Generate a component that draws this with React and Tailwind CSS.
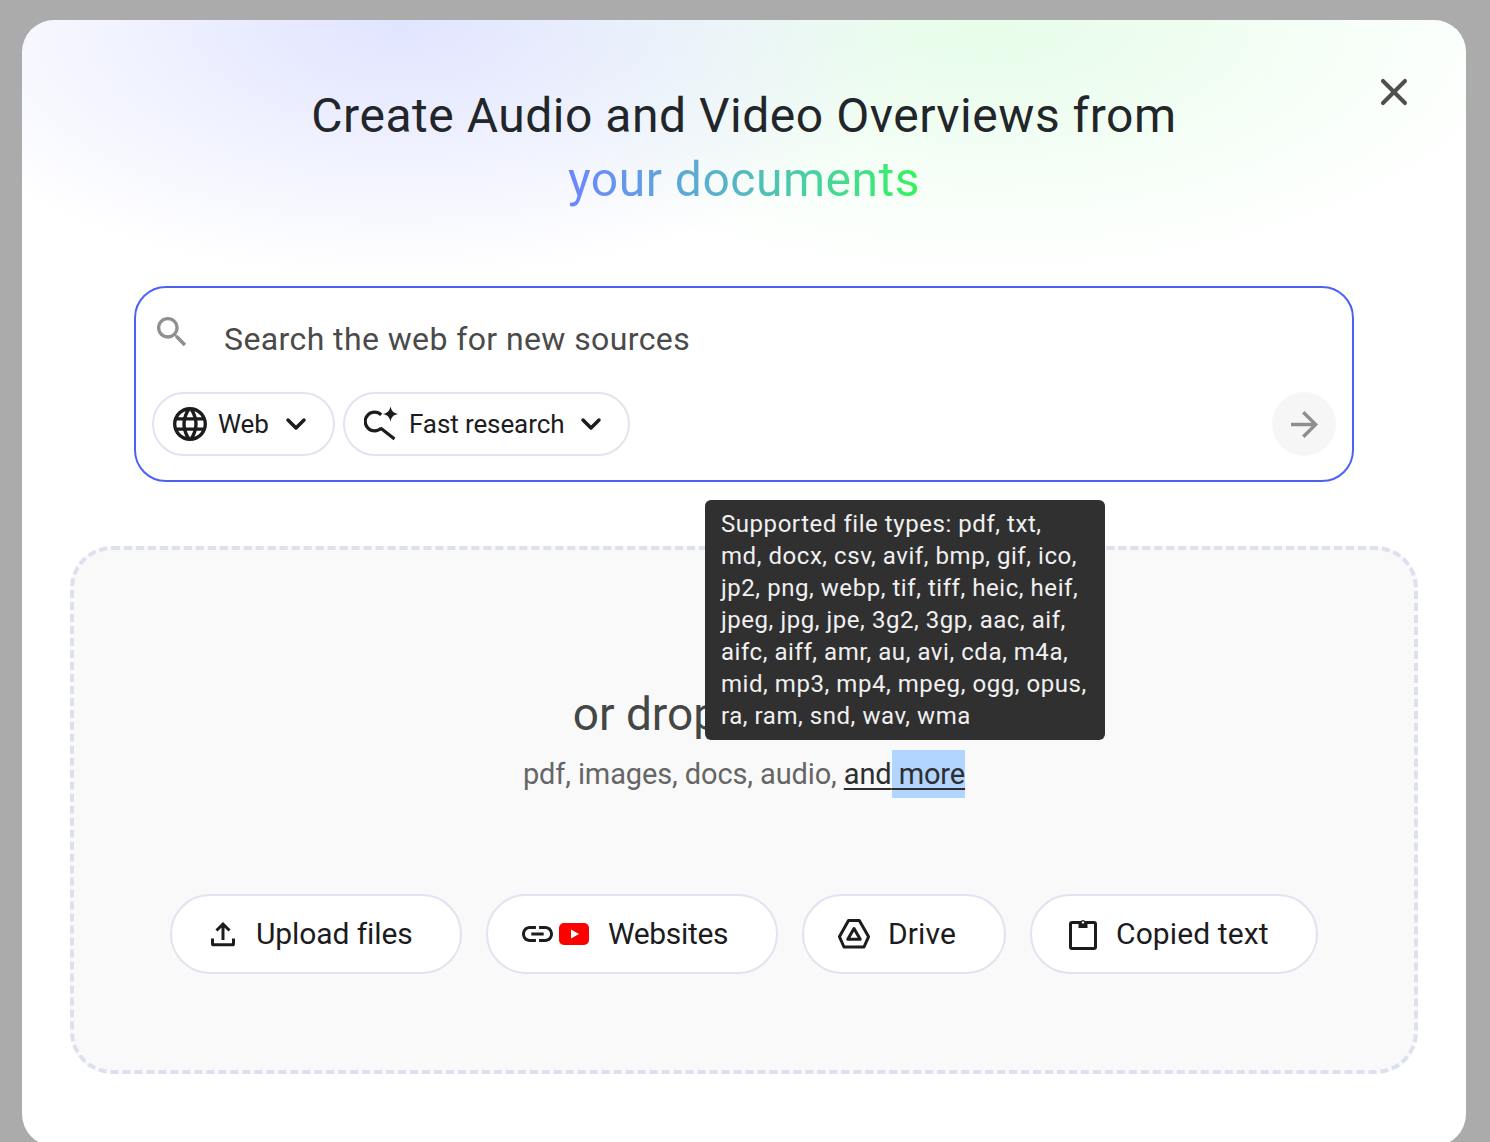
import { ChevronDown, X } from "lucide-react";

const SearchIcon = () => (
  <svg viewBox="0 0 24 24" className="h-[40px] w-[40px] fill-[#8f8f8f]">
    <path d="M15.5 14h-.79l-.28-.27C15.41 12.59 16 11.11 16 9.5 16 5.91 13.09 3 9.5 3S3 5.91 3 9.5 5.91 16 9.5 16c1.61 0 3.09-.59 4.23-1.57l.27.28v.79l5 4.99L20.49 19l-4.99-5zm-6 0C7.01 14 5 11.99 5 9.5S7.01 5 9.5 5 14 7.01 14 9.5 11.99 14 9.5 14z" />
  </svg>
);

const GlobeIcon = () => (
  <svg viewBox="2 2 20 20" className="h-[34px] w-[34px] shrink-0 fill-[#1c1c1e]">
    <path d="M11.99 2C6.47 2 2 6.48 2 12s4.47 10 9.99 10C17.52 22 22 17.52 22 12S17.52 2 11.99 2zm6.93 6h-2.95c-.32-1.25-.78-2.45-1.38-3.56 1.84.63 3.37 1.91 4.33 3.56zM12 4.04c.83 1.2 1.48 2.53 1.91 3.96h-3.82c.43-1.43 1.08-2.76 1.91-3.96zM4.26 14C4.1 13.36 4 12.69 4 12s.1-1.36.26-2h3.38c-.08.66-.14 1.32-.14 2 0 .68.06 1.34.14 2H4.26zm.82 2h2.95c.32 1.25.78 2.45 1.38 3.56-1.84-.63-3.37-1.9-4.33-3.56zm2.95-8H5.08c.96-1.66 2.49-2.93 4.33-3.56C8.81 5.55 8.35 6.75 8.03 8zM12 19.96c-.83-1.2-1.48-2.53-1.91-3.96h3.82c-.43 1.43-1.08 2.76-1.91 3.96zM14.34 14H9.66c-.09-.66-.16-1.32-.16-2 0-.68.07-1.35.16-2h4.68c.09.65.16 1.32.16 2 0 .68-.07 1.34-.16 2zm.25 5.56c.6-1.11 1.06-2.31 1.38-3.56h2.95c-.96 1.65-2.49 2.93-4.33 3.56zM16.36 14c.08-.66.14-1.32.14-2 0-.68-.06-1.34-.14-2h3.38c.16.64.26 1.31.26 2s-.1 1.36-.26 2h-3.38z" />
  </svg>
);

const SparkSearchIcon = () => (
  <svg viewBox="0 0 34 34" className="h-[34px] w-[34px] shrink-0">
    <path
      d="M17.2 7.8A9.4 9.4 0 1 0 17.2 21.2M16.5 21L30.5 32"
      fill="none"
      stroke="#1c1c1e"
      strokeWidth="3.2"
    />
    <path d="M26.5 -1c.8 5 3 7.2 8 8-5 .8-7.2 3-8 8-.8-5-3-7.2-8-8 5-.8 7.2-3 8-8z" fill="#1c1c1e" />
  </svg>
);

const UploadIcon = () => (
  <svg viewBox="0 0 26 26" className="h-[26px] w-[26px]" fill="none" stroke="#1c1c1e" strokeWidth="3">
    <path d="M13 19V3.5M6.5 9.5L13 3l6.5 6.5" />
    <path d="M2.5 17.5v5.2c0 .7.5 1.1 1.1 1.1h18.8c.6 0 1.1-.4 1.1-1.1v-5.2" />
  </svg>
);

const LinkIcon = () => (
  <svg viewBox="2 7 20 10" className="h-[16px] w-[31px]" preserveAspectRatio="none">
    <path
      fill="#1c1c1e"
      d="M3.9 12c0-1.71 1.39-3.1 3.1-3.1h4V7H7c-2.76 0-5 2.24-5 5s2.24 5 5 5h4v-1.9H7c-1.71 0-3.1-1.39-3.1-3.1zM8 13h8v-2H8v2zm9-6h-4v1.9h4c1.71 0 3.1 1.39 3.1 3.1s-1.39 3.1-3.1 3.1h-4V17h4c2.76 0 5-2.24 5-5s-2.24-5-5-5z"
    />
  </svg>
);

const YoutubeIcon = () => (
  <svg viewBox="0 0 30 22" className="h-[22px] w-[30px]">
    <rect width="30" height="22" rx="5" fill="#ff0000" />
    <path d="M12 6.5L20 11l-8 4.5z" fill="#fff" />
  </svg>
);

const DriveIcon = () => (
  <svg viewBox="0 0 32 30" className="h-[30px] w-[32px]" fill="none" stroke="#1c1c1e" strokeWidth="3" strokeLinejoin="round">
    <path d="M10.5 1.5h10.8L30.6 17.7 26 28H6L1.4 17.7z" />
    <path d="M16 9.5l6.2 10.7H9.8z" />
  </svg>
);

const ClipboardIcon = () => (
  <svg viewBox="0 0 28 32" className="h-[32px] w-[28px]">
    <path
      d="M3 4.5h22c.8 0 1.5.7 1.5 1.5v23c0 .8-.7 1.5-1.5 1.5H3c-.8 0-1.5-.7-1.5-1.5V6c0-.8.7-1.5 1.5-1.5z"
      fill="none"
      stroke="#1c1c1e"
      strokeWidth="3"
    />
    <path d="M9.5 3.5h2.1a2.6 2.6 0 0 1 4.8 0h2.1v6.5h-9z" fill="#1c1c1e" />
    <circle cx="14" cy="4.4" r="1.2" fill="#fff" />
  </svg>
);

const ArrowIcon = () => (
  <svg viewBox="4 4 16 16" className="h-[27px] w-[27px] fill-[#8e8e8e]">
    <path d="M12 4l-1.41 1.41L16.17 11H4v2h12.17l-5.58 5.59L12 20l8-8z" />
  </svg>
);

const Chip = ({ icon, label, className }) => (
  <button className={`flex h-16 items-center rounded-full border-2 border-[#e0e4ef] bg-white pl-[19px] text-[#1c1c1e] ${className}`}>
    {icon}
    <span className="ml-[11px] text-[26px] leading-8 font-normal tracking-[-0.1px]">{label}</span>
    <ChevronDown size={32} strokeWidth={2.6} className="ml-[11px]" />
  </button>
);

const SourceButton = ({ icon, label, className, labelClassName }) => (
  <button className={`flex h-20 items-center rounded-full border-2 border-[#e0e4f0] bg-white text-[#1c1c1e] ${className}`}>
    {icon}
    <span className={`text-[30px] leading-10 ${labelClassName}`}>{label}</span>
  </button>
);

export default function App() {
  return (
    <div className="h-[1142px] w-full overflow-hidden bg-[#ababab] pt-5 pr-[24px] pl-[22px] font-['Roboto',sans-serif]">
      <div className="relative h-[1126px] rounded-[32px] bg-white bg-[radial-gradient(ellipse_520px_260px_at_378px_0px,#e0e4ff_0%,rgba(255,255,255,0)_100%),radial-gradient(ellipse_560px_260px_at_965px_0px,#e6fde9_0%,rgba(255,255,255,0)_100%)] pt-16">
        <button className="absolute top-[50px] right-[50px] text-[#4d504f]">
          <X size={44} strokeWidth={2.2} />
        </button>

        <h1 className="text-center text-[48px] leading-16 font-normal tracking-[0.52px] text-[#22262a]">
          Create Audio and Video Overviews from
          <br />
          <span className="bg-gradient-to-r from-[#6c84ff] via-[#55b8c0] to-[#33f457] bg-clip-text text-transparent">
            your documents
          </span>
        </h1>

        <div className="mx-[112px] mt-[74px] h-[196px] rounded-[32px] border-2 border-[#4a63f5] bg-white px-4 pt-6">
          <div className="flex h-[54px] items-center">
            <div className="-mt-[14px]">
              <SearchIcon />
            </div>
            <span className="ml-[32px] text-[32px] leading-10 tracking-[0.4px] text-[#4a4a4a]">
              Search the web for new sources
            </span>
          </div>
          <div className="mt-[26px] flex items-center gap-2">
            <Chip icon={<GlobeIcon />} label="Web" className="w-[183px]" />
            <Chip icon={<SparkSearchIcon />} label="Fast research" className="w-[287px]" />
            <div className="ml-auto flex h-16 w-16 items-center justify-center rounded-full bg-[#f6f6f6]">
              <ArrowIcon />
            </div>
          </div>
        </div>

        <div className="relative mx-[48px] mt-16 h-[528px] rounded-[42px] border-4 border-dashed border-[#dde1ee] bg-[#f9f9f9] pt-[136px] text-center">
          <p className="text-[46px] leading-14 font-normal text-[#444746]">or drop your files</p>
          <p className="mt-2 flex h-12 items-center justify-center text-[29px] leading-12 tracking-[-0.12px] text-[#666]">
            <span className="whitespace-pre">pdf, images, docs, audio, </span>
            <span className="text-[#2e2e2e] underline decoration-2 underline-offset-4">and</span>
            <span className="h-12 whitespace-pre bg-[#b2d5ff] text-[#2e2e2e] underline decoration-2 underline-offset-4"> more</span>
          </p>

          <div className="mt-24 flex justify-center gap-6">
            <SourceButton icon={<UploadIcon />} label="Upload files" className="w-[292px] gap-[20px] pl-[38px]" labelClassName="tracking-[-0.1px]" />
            <SourceButton
              icon={
                <span className="flex items-center gap-[6px]">
                  <LinkIcon />
                  <YoutubeIcon />
                </span>
              }
              label="Websites"
              className="w-[292px] gap-[19px] pl-[34px]"
              labelClassName="tracking-[-0.35px]"
            />
            <SourceButton icon={<DriveIcon />} label="Drive" className="w-[204px] gap-[18px] pl-[34px]" labelClassName="tracking-[0.1px]" />
            <SourceButton icon={<ClipboardIcon />} label="Copied text" className="w-[288px] gap-[19px] pl-[37px]" labelClassName="tracking-[0.1px]" />
          </div>

          <div className="absolute top-[-50px] left-[631px] w-[400px] rounded-md bg-[#303030] px-4 py-2 text-left text-[24px] leading-8 tracking-[0.55px] text-[#f0f0f0]">
            Supported file types: pdf, txt, md, docx, csv, avif, bmp, gif, ico, jp2, png, webp, tif, tiff, heic, heif, jpeg, jpg, jpe, 3g2, 3gp, aac, aif, aifc, aiff, amr, au, avi, cda, m4a, mid, mp3, mp4, mpeg, ogg, opus, ra, ram, snd, wav, wma
          </div>
        </div>
      </div>
    </div>
  );
}
